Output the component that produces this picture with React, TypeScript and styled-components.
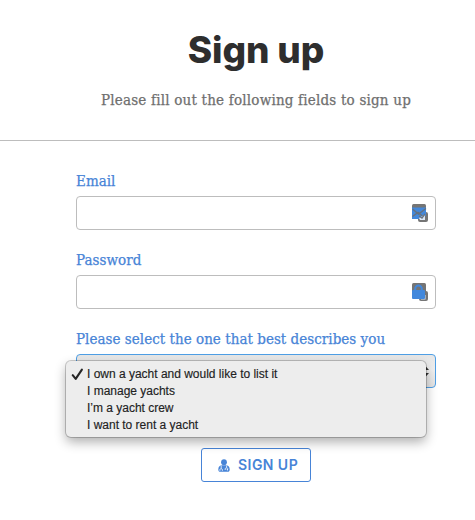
import React from 'react';
import styled, { createGlobalStyle } from 'styled-components';

const GlobalStyle = createGlobalStyle`
  *, *::before, *::after { box-sizing: border-box; }
  body { margin: 0; background: #fff; overflow: hidden; }
`;

const serif = `"DejaVu Serif Condensed", "DejaVu Serif", serif`;

const Page = styled.main`
  height: 520px;
  background: #fff;
`;

const Header = styled.header`
  height: 141px;
  padding: 28px 0 0 37px;
  border-bottom: 1px solid #bdbdbd;
  text-align: center;
`;

const Title = styled.h1`
  margin: 0;
  font: 800 37px/44px Inter, sans-serif;
  letter-spacing: -0.1px;
  color: #2e2e2e;
`;

const Subtitle = styled.p`
  margin: 18px 0 0;
  font: 15px/20px ${serif};
  letter-spacing: 0.2px;
  color: #6f6f6f;
  -webkit-text-stroke: 0.25px #6f6f6f;
`;

const Form = styled.form`
  display: flex;
  flex-direction: column;
  width: 360px;
  margin-left: 76px;
  padding-top: 30px;
`;

const Field = styled.div`
  position: relative;
  height: 79px;
`;

const Label = styled.label`
  display: block;
  height: 25px;
  font: 15px/20px ${serif};
  letter-spacing: 0.03px;
  white-space: nowrap;
  color: #4784d7;
  -webkit-text-stroke: 0.25px #4784d7;
`;

const InputBox = styled.div`
  display: flex;
  align-items: center;
  justify-content: flex-end;
  height: 34px;
  padding-right: 7px;
  border: 1px solid #bdbdbd;
  border-radius: 4px;
  background: #fff;
`;

const Input = styled.input`
  flex: 1;
  min-width: 0;
  height: 30px;
  padding: 0 8px;
  border: 0;
  outline: 0;
  background: transparent;
  font: 15px ${serif};
`;

const SelectBox = styled(InputBox)`
  padding-right: 6px;
  border-color: #4f9fe5;
  background: linear-gradient(#e6e6e6, #f0f0f0 45%, #e4e4e4);
`;

const Menu = styled.ul`
  position: absolute;
  top: 32px;
  left: -10px;
  width: 360px;
  height: 76px;
  margin: 0;
  padding: 5px 0 3px;
  list-style: none;
  border-radius: 5px;
  background: #ededed;
  box-shadow: 0 0 0 1px rgba(0, 0, 0, 0.2), 0 5px 12px rgba(0, 0, 0, 0.32);
`;

const Option = styled.li`
  display: flex;
  align-items: center;
  height: 17px;
  font: 12px/17px "Liberation Sans", Arial, sans-serif;
  letter-spacing: -0.01px;
  color: #222;
  -webkit-text-stroke: 0.15px #222;
`;

const CheckSlot = styled.span`
  display: flex;
  flex: 0 0 21px;
  padding-left: 5px;
`;

const SubmitButton = styled.button`
  display: flex;
  align-items: center;
  align-self: flex-start;
  width: 110px;
  height: 34px;
  margin: 40px 0 0 125px;
  padding: 0 0 0 16px;
  border: 1px solid #4784d7;
  border-radius: 3px;
  background: #fff;
  color: #4784d7;
  font: 600 14px/20px Inter, sans-serif;
  letter-spacing: 0.45px;
  white-space: nowrap;
`;

const ButtonText = styled.span`
  margin-left: 8px;
`;

const EmailIcon = () => (
  <svg width="17" height="18" viewBox="0 0 17 18">
    <rect x="1" width="14" height="13" rx="1.5" fill="#757575" />
    <rect x="7" y="8" width="10" height="10" rx="2" fill="#757575" />
    <path d="M1 3.5h14V12l-4 1-3 2H1z" fill="#4288dc" />
    <path d="M1.5 5l6 5L15 4.5M1.5 12.5L7 8.5l5 4" fill="none" stroke="#65717f" strokeWidth="1.4" />
    <path d="M8 14l3.5-2 2.5-2v6H9z" fill="#dce8f7" />
    <path d="M8 12l3 2 3-4" fill="none" stroke="#687380" strokeWidth="1.3" />
  </svg>
);

const LockIcon = () => (
  <svg width="17" height="18" viewBox="0 0 17 18">
    <rect x="1" width="14" height="14" rx="1.5" fill="#757575" />
    <rect x="8" y="8" width="9" height="10" rx="2" fill="#757575" />
    <path d="M10 12h4.5v4.5H10z" fill="#dce8f7" />
    <path d="M4.2 8V5.9a3.3 3.3 0 0 1 6.6 0V8" fill="none" stroke="#4288dc" strokeWidth="2" />
    <rect x="1" y="7" width="13" height="9" rx="1" fill="#4288dc" />
  </svg>
);

const Arrows = () => (
  <svg width="9" height="13" viewBox="0 0 9 13">
    <path d="M0 5L4.5 0 9 5zM0 8h9l-4.5 5z" fill="#333" />
  </svg>
);

const Check = () => (
  <svg width="13" height="13" viewBox="0 0 13 13">
    <path d="M1.7 7.2l3 3.7L10.9 1.7" fill="none" stroke="#262626" strokeWidth="2.1" strokeLinecap="round" strokeLinejoin="round" />
  </svg>
);

const DoctorIcon = () => (
  <svg width="12" height="13" viewBox="0 0 12 13">
    <circle cx="6" cy="3.2" r="2.9" fill="#4784d7" />
    <path d="M0.3 10.4C.3 8 1.6 6.5 3.3 6.2h5.4c1.7.3 3 1.8 3 4.2 0 1.7-.8 2.3-1.9 2.3H2.2C1.1 12.7.3 12.1.3 10.4z" fill="#4784d7" />
    <path d="M3.2 6.5v3M1.9 11.8v-1.3c0-1 2.5-1 2.5 0v1.3M8.6 6.5v2.2M7.2 11V9.8c0-1.2 2.7-1.2 2.7 0" fill="none" stroke="#fff" strokeWidth="0.8" />
    <circle cx="9.4" cy="10.8" r=".7" fill="#fff" />
  </svg>
);

const options = [
  'I own a yacht and would like to list it',
  'I manage yachts',
  'I’m a yacht crew',
  'I want to rent a yacht',
];

export default function App() {
  return (
    <Page>
      <GlobalStyle />
      <Header>
        <Title>Sign up</Title>
        <Subtitle>Please fill out the following fields to sign up</Subtitle>
      </Header>
      <Form>
        <Field>
          <Label htmlFor="email">Email</Label>
          <InputBox><Input id="email" type="email" /><EmailIcon /></InputBox>
        </Field>
        <Field>
          <Label htmlFor="password">Password</Label>
          <InputBox><Input id="password" type="password" /><LockIcon /></InputBox>
        </Field>
        <Field>
          <Label>Please select the one that best describes you</Label>
          <SelectBox><Arrows /></SelectBox>
          <Menu>
            {options.map((text, i) => (
              <Option key={text}>
                <CheckSlot>{i === 0 && <Check />}</CheckSlot>
                {text}
              </Option>
            ))}
          </Menu>
        </Field>
        <SubmitButton type="button">
          <DoctorIcon />
          <ButtonText>SIGN UP</ButtonText>
        </SubmitButton>
      </Form>
    </Page>
  );
}
